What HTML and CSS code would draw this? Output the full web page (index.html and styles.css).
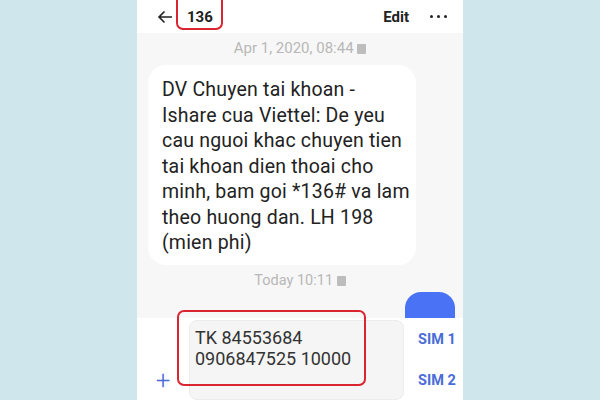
FILE: index.html
```html
<!DOCTYPE html>
<html lang="en">
<head>
    <meta charset="UTF-8">
    <meta name="viewport" content="width=device-width, initial-scale=1.0">
    <title>136</title>
    <link rel="stylesheet" href="styles.css">
</head>
<body>
    <div class="phone">
        <div class="header">
            <svg class="back" width="16" height="14" viewBox="0 0 16 14">
                <path d="M15 7H2M7.5 1.5L2 7l5.5 5.5" fill="none" stroke="#222" stroke-width="1.6"/>
            </svg>
            <span class="title">136</span>
            <span class="edit">Edit</span>
            <span class="dots"><i></i><i></i><i></i></span>
        </div>
        <div class="thread">
            <div class="stamp">Apr 1, 2020, 08:44 <span class="sim-icon"></span></div>
            <div class="bubble">
                DV Chuyen tai khoan -<br>
                Ishare cua Viettel: De yeu<br>
                cau nguoi khac chuyen tien<br>
                tai khoan dien thoai cho<br>
                minh, bam goi *136# va lam<br>
                theo huong dan. LH 198<br>
                (mien phi)
            </div>
            <div class="stamp stamp-today">Today 10:11 <span class="sim-icon"></span></div>
            <div class="sent"></div>
        </div>
        <div class="composer">
            <span class="plus">+</span>
            <div class="input">TK 84553684<br>0906847525 10000</div>
            <div class="sims">
                <span>SIM 1</span>
                <span>SIM 2</span>
            </div>
        </div>
        <div class="mark mark-title"></div>
        <div class="mark mark-input"></div>
    </div>
</body>
</html>
```

FILE: styles.css
```css
body {
    margin: 0;
    background-color: #cfe6ec;
    font-family: Roboto, "Noto Sans", sans-serif;
}
.phone {
    position: relative;
    width: 326px;
    height: 400px;
    margin: 0 auto;
    background-color: #fff;
    display: flex;
    flex-direction: column;
    overflow: hidden;
}
.header {
    height: 33px;
    display: flex;
    align-items: center;
    padding: 0 16px 0 20px;
    background-color: #fff;
}
.back {
    margin-right: 14px;
}
.title {
    font-size: 15px;
    font-weight: bold;
    color: #222;
}
.edit {
    margin-left: auto;
    font-size: 15px;
    font-weight: bold;
    color: #222;
}
.dots {
    display: flex;
    gap: 4px;
    margin-left: 21px;
}
.dots i {
    width: 3px;
    height: 3px;
    border-radius: 50%;
    background-color: #222;
}
.thread {
    height: 285px;
    background-color: #f7f7f7;
    display: flex;
    flex-direction: column;
}
.stamp {
    margin-top: 6px;
    text-align: center;
    font-size: 15px;
    line-height: 18px;
    color: #b8b8b8;
}
.sim-icon {
    display: inline-block;
    width: 9px;
    height: 10px;
    border-radius: 1px;
    background-color: #bdbdbd;
    vertical-align: -1px;
}
.bubble {
    width: 240px;
    margin: 8px 0 0 11px;
    padding: 12px 14px 9px;
    border-radius: 18px;
    background-color: #fff;
    font-size: 19.5px;
    line-height: 25.5px;
    letter-spacing: 0.2px;
    color: #222;
    white-space: nowrap;
}
.stamp-today {
    margin-top: 7px;
    font-size: 14.5px;
}
.sent {
    width: 50px;
    height: 26px;
    margin: auto 8px 0 auto;
    border-radius: 16px 16px 0 0;
    background-color: #4a72f4;
}
.composer {
    flex: 1;
    display: flex;
    padding-top: 2px;
}
.plus {
    align-self: flex-end;
    width: 52px;
    text-align: center;
    margin-bottom: 5px;
    font-size: 26px;
    font-weight: 300;
    line-height: 30px;
    color: #4a6cd8;
}
.input {
    width: 208px;
    height: 72px;
    padding: 6px 0 0 5px;
    border: 1px solid #ececec;
    border-radius: 8px;
    background-color: #f5f5f5;
    font-size: 18px;
    line-height: 21px;
    color: #333;
}
.sims {
    display: flex;
    flex-direction: column;
    margin-left: 14px;
    padding-top: 11px;
    gap: 24px;
    font-size: 14.5px;
    font-weight: bold;
    color: #4a6cd8;
}
.mark {
    position: absolute;
    border: 2px solid #d9252f;
    border-radius: 7px;
}
.mark-title {
    left: 39px;
    top: -6px;
    width: 43px;
    height: 32px;
}
.mark-input {
    left: 40px;
    top: 310px;
    width: 185px;
    height: 72px;
}
```
